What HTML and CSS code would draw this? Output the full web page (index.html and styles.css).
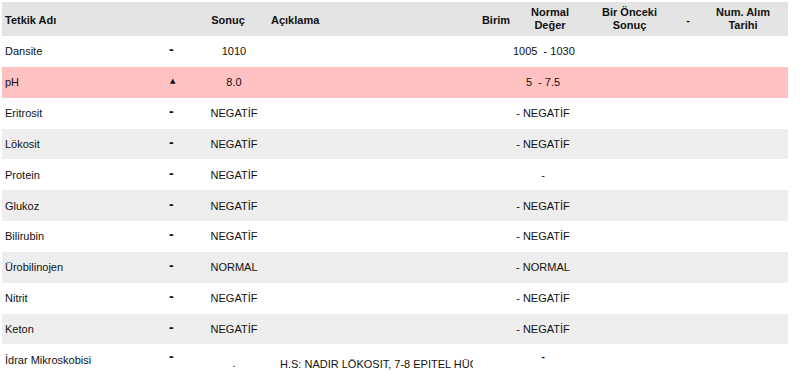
FILE: index.html
```html
<!DOCTYPE html>
<html lang="tr">
<head>
<meta charset="utf-8">
<title>Tetkik Sonuçları</title>
<link rel="stylesheet" href="styles.css">
</head>
<body>
<table class="results">
  <colgroup>
    <col class="c-name"><col class="c-flag"><col class="c-res"><col class="c-desc"><col class="c-unit"><col class="c-norm"><col class="c-prev"><col class="c-flag2"><col class="c-date">
  </colgroup>
  <thead>
    <tr class="head">
      <th class="name">Tetkik Adı</th>
      <th></th>
      <th class="res-h">Sonuç</th>
      <th class="desc">Açıklama</th>
      <th class="unit">Birim</th>
      <th class="norm-h">Normal<br>Değer</th>
      <th class="prev-h">Bir Önceki<br>Sonuç</th>
      <th class="flag2">-</th>
      <th class="date">Num. Alım<br>Tarihi</th>
    </tr>
  </thead>
  <tbody>
    <tr class="white"><td class="name">Dansite</td><td class="flag">-</td><td class="res">1010</td><td></td><td></td><td class="norm">1005  - 1030</td><td></td><td></td><td></td></tr>
    <tr class="high"><td class="name">pH</td><td class="flag"><span class="tri">▲</span></td><td class="res">8.0</td><td></td><td></td><td class="norm">5  - 7.5</td><td></td><td></td><td></td></tr>
    <tr class="white"><td class="name">Eritrosit</td><td class="flag">-</td><td class="res">NEGATİF</td><td></td><td></td><td class="norm">- NEGATİF</td><td></td><td></td><td></td></tr>
    <tr class="gray"><td class="name">Lökosit</td><td class="flag">-</td><td class="res">NEGATİF</td><td></td><td></td><td class="norm">- NEGATİF</td><td></td><td></td><td></td></tr>
    <tr class="white"><td class="name">Protein</td><td class="flag">-</td><td class="res">NEGATİF</td><td></td><td></td><td class="norm">-</td><td></td><td></td><td></td></tr>
    <tr class="gray"><td class="name">Glukoz</td><td class="flag">-</td><td class="res">NEGATİF</td><td></td><td></td><td class="norm">- NEGATİF</td><td></td><td></td><td></td></tr>
    <tr class="white"><td class="name">Bilirubin</td><td class="flag">-</td><td class="res">NEGATİF</td><td></td><td></td><td class="norm">- NEGATİF</td><td></td><td></td><td></td></tr>
    <tr class="gray"><td class="name">Ürobilinojen</td><td class="flag">-</td><td class="res">NORMAL</td><td></td><td></td><td class="norm">- NORMAL</td><td></td><td></td><td></td></tr>
    <tr class="white"><td class="name">Nitrit</td><td class="flag">-</td><td class="res">NEGATİF</td><td></td><td></td><td class="norm">- NEGATİF</td><td></td><td></td><td></td></tr>
    <tr class="gray"><td class="name">Keton</td><td class="flag">-</td><td class="res">NEGATİF</td><td></td><td></td><td class="norm">- NEGATİF</td><td></td><td></td><td></td></tr>
    <tr class="white micro"><td class="name">İdrar Mikroskobisi</td><td class="flag up">-</td><td class="res down">.</td><td class="desc-long" colspan="2"><div class="clip">H.S: NADIR LÖKOSIT, 7-8 EPITEL HÜCRESİ</div></td><td class="norm up">-</td><td></td><td></td><td></td></tr>
  </tbody>
</table>
</body>
</html>
```

FILE: styles.css
```css
html, body {
  margin: 0;
  padding: 0;
  background: #ffffff;
}

body {
  padding: 2px 0 0 2px;
  font-family: "Liberation Sans", Arial, sans-serif;
  font-size: 11px;
  color: #111111;
}

.results {
  width: 786px;
  border-collapse: collapse;
  border-spacing: 0;
  table-layout: fixed;
}

.c-name { width: 158px; }
.c-flag { width: 40px; }
.c-res { width: 68px; }
.c-desc { width: 210px; }
.c-unit { width: 35px; }
.c-norm { width: 74px; }
.c-prev { width: 91px; }
.c-flag2 { width: 20px; }
.c-date { width: 90px; }

th, td {
  padding: 0;
  vertical-align: middle;
  white-space: nowrap;
  overflow: hidden;
}

.head {
  height: 34px;
  background: #e4e4e4;
}

.head th {
  font-weight: bold;
  line-height: 13px;
  text-align: center;
  color: #111111;
}

.head th.name { text-align: left; padding-left: 3px; padding-top: 3px; }
.head th.res-h { padding-right: 12px; padding-top: 3px; }
.head th.desc { text-align: left; padding-left: 3px; padding-top: 3px; }
.head th.unit { text-align: right; padding-right: 3px; padding-top: 3px; }
.head th.prev-h { padding-right: 6px; }
.head th.flag2 { padding-top: 3px; }

tbody tr { height: 30.85px; }
.white { background: #ffffff; }
.gray { background: #eeeeee; }
.high { background: #ffc1c1; }

td.name { padding-left: 3px; }

td.flag {
  text-align: left;
  padding-left: 9px;
  font-weight: bold;
  font-size: 14px;
  line-height: 14px;
  padding-bottom: 4px;
}

.tri {
  font-family: "DejaVu Sans", sans-serif;
  font-size: 7px;
  position: relative;
  top: -1px;
  left: 1px;
}

td.res { text-align: center; }

td.norm {
  text-align: center;
  padding-right: 14px;
  white-space: pre;
}

.micro td.up { padding-bottom: 8px; }
.micro td.down { padding-top: 7px; }

.micro td.norm.up { font-weight: bold; }

td.desc-long { padding-left: 12px; padding-top: 8px; }

.clip {
  width: 193px;
  overflow: hidden;
  white-space: nowrap;
}
```
